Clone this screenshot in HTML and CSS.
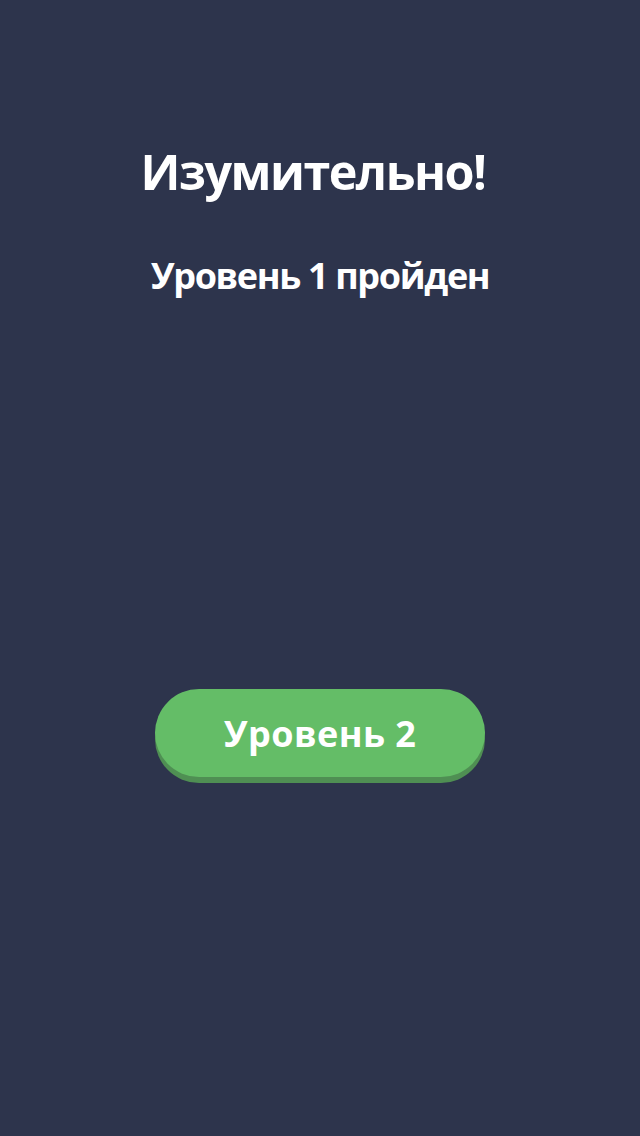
FILE: index.html
```html
<!DOCTYPE html>
<html lang="ru">
<head>
<meta charset="utf-8">
<link rel="stylesheet" href="styles.css">
</head>
<body>
<main class="screen">
  <h1 class="title">Изумительно!</h1>
  <p class="subtitle">Уровень 1 пройден</p>
  <button class="next-btn">Уровень 2</button>
</main>
</body>
</html>
```
FILE: styles.css
```css
html, body {
  margin: 0;
  padding: 0;
  background: #2d344c;
}
.screen {
  width: 640px;
  height: 1136px;
  display: flex;
  flex-direction: column;
  align-items: center;
  font-family: "Open Sans", "DejaVu Sans", sans-serif;
  color: #ffffff;
}
.title {
  margin: 141px 14px 0 0;
  font-size: 48.5px;
  font-weight: 700;
  line-height: 60px;
  letter-spacing: -1.5px;
}
.subtitle {
  margin: 53px 0 0 0;
  font-size: 36px;
  font-weight: 700;
  line-height: 44px;
  letter-spacing: -1.35px;
}
.next-btn {
  margin-top: 391px;
  width: 330px;
  height: 88px;
  border: none;
  border-radius: 44px;
  background: #64bd67;
  box-shadow: 0 6px 0 #4f8f53;
  color: #ffffff;
  font-family: "Open Sans", "DejaVu Sans", sans-serif;
  font-size: 36px;
  font-weight: 700;
  letter-spacing: 0.4px;
  padding: 0;
}
```
